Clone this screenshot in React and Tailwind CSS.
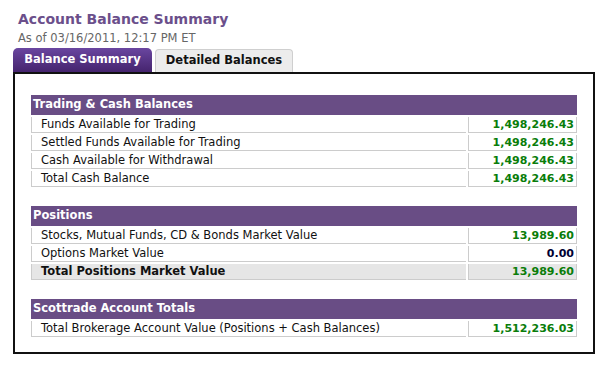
const SECTIONS = [
  {
    title: 'Trading & Cash Balances',
    rows: [
      { label: 'Funds Available for Trading', value: '1,498,246.43' },
      { label: 'Settled Funds Available for Trading', value: '1,498,246.43' },
      { label: 'Cash Available for Withdrawal', value: '1,498,246.43' },
      { label: 'Total Cash Balance', value: '1,498,246.43' },
    ],
  },
  {
    title: 'Positions',
    rows: [
      { label: 'Stocks, Mutual Funds, CD & Bonds Market Value', value: '13,989.60' },
      { label: 'Options Market Value', value: '0.00', zero: true },
      { label: 'Total Positions Market Value', value: '13,989.60', total: true },
    ],
  },
  {
    title: 'Scottrade Account Totals',
    rows: [
      { label: 'Total Brokerage Account Value (Positions + Cash Balances)', value: '1,512,236.03' },
    ],
  },
];

function Row({ label, value, zero, total }) {
  const bg = total ? 'bg-[#e6e6e6]' : 'bg-white';
  return (
    <div className="flex gap-[2px]">
      <div
        className={`flex-1 h-[16px] border-l border-b border-[#cccccc] pl-[9px] flex items-center text-[11.5px] leading-none ${bg} ${
          total ? 'font-bold text-[#111]' : 'text-[#111]'
        }`}
      >
        {label}
      </div>
      <div
        className={`w-[109px] h-[16px] border-l border-r border-b border-[#cccccc] pr-[2px] flex items-center justify-end text-[11px] leading-none font-bold ${bg} ${
          zero ? 'text-[#000033]' : 'text-[#0a7d0a]'
        }`}
      >
        {value}
      </div>
    </div>
  );
}

function Section({ title, rows }) {
  return (
    <div className="flex flex-col gap-[2px]">
      <div className="h-[20px] bg-[#694d85] text-white font-bold text-[11.5px] leading-none pl-[2px] flex items-center">
        {title}
      </div>
      {rows.map((r) => (
        <Row key={r.label} {...r} />
      ))}
    </div>
  );
}

export default function App() {
  return (
    <div className="w-[612px] h-[378px] bg-white font-['DejaVu_Sans',sans-serif] overflow-hidden">
      {/* Heading */}
      <div className="pl-[18px] pt-[11px]">
        <h1 className="text-[14px] leading-[17px] font-bold text-[#6b4f8b]">Account Balance Summary</h1>
        <p className="text-[11.5px] leading-[14px] mt-[3px] text-[#666]">As of 03/16/2011, 12:17 PM ET</p>
      </div>

      {/* Tabs */}
      <div className="ml-[13px] mt-[3px] flex items-end gap-[3px] h-[24px]">
        <div className="w-[139px] h-[24px] rounded-t-[5px] bg-gradient-to-b from-[#6a46a0] to-[#45246e] text-white font-bold text-[11.5px] flex items-center justify-center">
          Balance Summary
        </div>
        <div className="w-[138px] h-[23px] rounded-t-[4px] border border-b-0 border-[#cfcfcf] bg-[#ececec] text-[#111] font-bold text-[11.5px] flex items-center justify-center">
          Detailed Balances
        </div>
      </div>

      {/* Box */}
      <div className="ml-[13px] w-[582px] h-[282px] border-2 border-[#111] pt-[21px] px-[16px] flex flex-col gap-[19px]">
        {SECTIONS.map((s) => (
          <Section key={s.title} {...s} />
        ))}
      </div>
    </div>
  );
}
